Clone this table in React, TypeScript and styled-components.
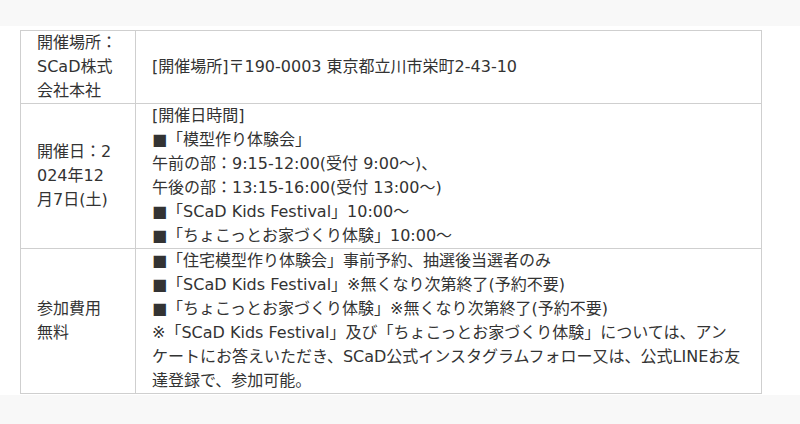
import React, { FC } from 'react'
import styled, { createGlobalStyle } from 'styled-components'

const GlobalStyles = createGlobalStyle`
  html, body {
    margin: 0;
    padding: 0;
    background: #f8f8f8;
  }
  body {
    font-family: 'DejaVu Sans', 'Noto Sans CJK JP', sans-serif;
    color: #333;
  }
`

type Row = {
  label: string
  lines: string[]
}

const rows: Row[] = [
  {
    label: '開催場所：SCaD株式会社本社',
    lines: ['[開催場所]〒190-0003 東京都立川市栄町2-43-10'],
  },
  {
    label: '開催日：2024年12月7日(土)',
    lines: [
      '[開催日時間]',
      '■「模型作り体験会」',
      '午前の部：9:15-12:00(受付 9:00～)、',
      '午後の部：13:15-16:00(受付 13:00～)',
      '■「SCaD Kids Festival」10:00～',
      '■「ちょこっとお家づくり体験」10:00～',
    ],
  },
  {
    label: '参加費用\n無料',
    lines: [
      '■「住宅模型作り体験会」事前予約、抽選後当選者のみ',
      '■「SCaD Kids Festival」※無くなり次第終了(予約不要)',
      '■「ちょこっとお家づくり体験」※無くなり次第終了(予約不要)',
      '※「SCaD Kids Festival」及び「ちょこっとお家づくり体験」については、アンケートにお答えいただき、SCaD公式インスタグラムフォロー又は、公式LINEお友達登録で、参加可能。',
    ],
  },
]

const App: FC = () => {
  return (
    <Page>
      <GlobalStyles />
      <Section>
        <InfoTable>
          <tbody>
            {rows.map((row) => (
              <tr key={row.label}>
                <LabelCell>{row.label}</LabelCell>
                <ValueCell>
                  {row.lines.map((line, i) => (
                    <Line key={i}>{line}</Line>
                  ))}
                </ValueCell>
              </tr>
            ))}
          </tbody>
        </InfoTable>
      </Section>
    </Page>
  )
}

export default App

const Page = styled.div`
  width: 800px;
  height: 424px;
  padding-top: 26px;
  box-sizing: border-box;
  background: #f8f8f8;
`

const Section = styled.section`
  background: #fff;
  padding: 4px 38px 1px 20px;
`

const InfoTable = styled.table`
  width: 742px;
  border-collapse: collapse;
  font-size: 16px;
  line-height: 24px;
  color: #333;
`

const LabelCell = styled.td`
  width: 81px;
  padding: 0 17px 0 16px;
  border: 1px solid #cfcfcf;
  vertical-align: middle;
  white-space: pre-line;
  word-break: break-all;
`

const ValueCell = styled.td`
  padding: 0 19px 0 16px;
  border: 1px solid #cfcfcf;
  vertical-align: middle;
`

const Line = styled.div`
  margin: 0;
`
